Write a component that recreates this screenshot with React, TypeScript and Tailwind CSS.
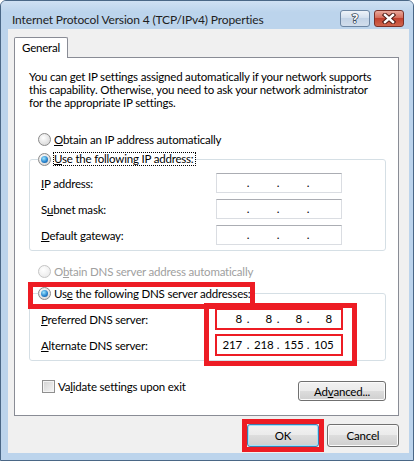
import React from 'react';

const Radio = ({ checked, disabled }: { checked?: boolean; disabled?: boolean }) => (
  <span
    className={`flex h-[13px] w-[13px] shrink-0 items-center justify-center rounded-full border ${
      disabled
        ? 'border-[#c4c4c4] bg-[radial-gradient(circle_at_40%_35%,#ffffff,#e6e6e6)]'
        : 'border-[#8a8a8a] bg-[radial-gradient(circle_at_40%_35%,#ffffff,#cfcfcf)]'
    }`}
  >
    {checked && (
      <span className="h-[7px] w-[7px] rounded-full bg-[radial-gradient(circle_at_40%_35%,#9fe8ff,#2a86cf_55%,#0c4c8f)]" />
    )}
  </span>
);

const IpBox = ({ parts, red }: { parts?: string[]; red?: boolean }) => {
  const p = parts ?? ['', '', '', ''];
  return (
    <div
      className={`flex h-[20px] w-[126px] shrink-0 items-center bg-white border leading-[14px] ${
        red ? 'border-[#ed1c24] ring-1 ring-[#ed1c24]' : 'border-[#dadde2] border-t-[#abadb3]'
      }`}
    >
      <span className="w-[25px] text-right whitespace-nowrap">{p[0]}</span>
      <span className="w-[12px] text-center">.</span>
      <span className="w-[18px] text-right whitespace-nowrap">{p[1]}</span>
      <span className="w-[12px] text-center">.</span>
      <span className="w-[18px] text-right whitespace-nowrap">{p[2]}</span>
      <span className="w-[12px] text-center">.</span>
      <span className="w-[18px] text-right whitespace-nowrap">{p[3]}</span>
    </div>
  );
};

const Row = ({ label, parts, red }: { label: React.ReactNode; parts?: string[]; red?: boolean }) => (
  <div className="flex h-[20px] items-center pl-[11px]">
    <span className="w-[175px]">{label}</span>
    <IpBox parts={parts} red={red} />
  </div>
);

const WinButton = ({ children, primary, className }: { children: React.ReactNode; primary?: boolean; className?: string }) => (
  <button
    className={`flex items-center justify-center rounded-[3px] border bg-[linear-gradient(#f2f2f2_0%,#ebebeb_48%,#dddddd_50%,#cfcfcf_100%)] text-[11.5px] text-black ${
      primary
        ? 'border-[#3c7fb1] shadow-[inset_0_0_0_1px_#9ee3fb]'
        : 'border-[#707070] shadow-[inset_0_0_0_1px_#fbfbfb]'
    } ${className ?? ''}`}
  >
    {children}
  </button>
);

export default function App() {
  return (
    <div className="h-[461px] w-[414px] overflow-hidden rounded-t-[6px] border border-[#4a6786] bg-[#bcd4ec] [font-family:Lato,sans-serif] text-[11.5px] leading-[13px] tracking-[-0.2px] text-black">
      {/* title bar */}
      <div className="flex h-[28px] items-start justify-between pl-[11px] pr-[9px] pt-[9px] bg-[linear-gradient(#cfe0f2,#bcd4ec_40%)]">
        <span className="mt-[2px] text-[12px] leading-[15px] tracking-[-0.15px] text-[#1e1e1e]">Internet Protocol Version 4 (TCP/IPv4) Properties</span>
        <div className="flex gap-[4px]">
          <div className="flex h-[17px] w-[30px] items-center justify-center rounded-[3px] border border-[#6d86a3] bg-[linear-gradient(#eef3f9,#d4e0ee_45%,#c3d3e6_50%,#d2deec)]">
            <svg width="14" height="15" viewBox="0 0 14 15">
              <text x="7" y="12" textAnchor="middle" fontSize="12" fontWeight="bold" fontFamily="Noto Sans, sans-serif" fill="#ffffff" stroke="#3b4a5c" strokeWidth="1.6" paintOrder="stroke">?</text>
            </svg>
          </div>
          <div className="flex h-[17px] w-[30px] items-center justify-center rounded-[3px] border border-[#7a3028] bg-[linear-gradient(#e9a99c,#d56e5d_45%,#c1412f_50%,#d0664e)]">
            <svg width="14" height="11" viewBox="0 0 14 11">
              <path d="M3 2 L11 9 M11 2 L3 9" stroke="#4d1a14" strokeWidth="4.4" strokeLinecap="square" />
              <path d="M3 2 L11 9 M11 2 L3 9" stroke="#ffffff" strokeWidth="2.4" strokeLinecap="square" />
            </svg>
          </div>
        </div>
      </div>

      {/* client area */}
      <div className="ml-[7px] mr-[4px] flex h-[424px] flex-col bg-[#f0f0f0] pl-[6px] pr-[10px] pt-[8px]">
        <div className="flex">
          <div className="relative z-10 -mb-px flex h-[21px] w-[54px] items-start rounded-t-[2px] border border-b-0 border-[#898c95] bg-white pl-[7px] pt-[3px] leading-[14px]">
            General
          </div>
        </div>
        <div className="relative h-[359px] border border-[#898c95] bg-white">
          <p className="ml-[14px] mr-[21px] mt-[12px]">
            You can get IP settings assigned automatically if your network supports this capability. Otherwise, you need to ask your network administrator for the appropriate IP settings.
          </p>

          <div className="ml-[23px] mt-[22px] flex h-[16px] items-center gap-[3px]">
            <Radio />
            <span><u>O</u>btain an IP address automatically</span>
          </div>

          <fieldset className="ml-[14px] mt-[4px] w-[357px] rounded-[3px] border border-[#d5dfe5] pb-[5px]">
            <legend className="ml-[8px] flex h-[16px] items-center gap-[2px]">
              <Radio checked />
              <span className="h-[14px] border border-dotted border-black pr-[1px] leading-[12px]"><u>U</u>se the following IP address:</span>
            </legend>
            <div className="flex flex-col gap-[6px] pt-[6px]">
              <Row label={<><u>I</u>P address:</>} />
              <Row label={<>S<u>u</u>bnet mask:</>} />
              <Row label={<><u>D</u>efault gateway:</>} />
            </div>
          </fieldset>

          <div className="ml-[23px] mt-[12px] flex h-[16px] items-center gap-[3px] text-[#a0a0a0]">
            <Radio disabled />
            <span>O<u>b</u>tain DNS server address automatically</span>
          </div>

          <fieldset className="ml-[14px] mt-[6px] w-[357px] rounded-[3px] border border-[#d5dfe5] pb-[5px]">
            <legend className="ml-[8px] flex h-[16px] items-center gap-[3px]">
              <Radio checked />
              <span>Us<u>e</u> the following DNS server addresses:</span>
            </legend>
            <div className="flex flex-col gap-[6px] pt-[8px]">
              <Row label={<><u>P</u>referred DNS server:</>} parts={['8', '8', '8', '8']} red />
              <Row label={<><u>A</u>lternate DNS server:</>} parts={['217', '218', '155', '105']} red />
            </div>
          </fieldset>

          <div className="ml-[27px] mr-[12px] mt-[17px] flex items-start justify-between">
            <div className="flex h-[16px] items-center gap-[3px]">
              <span className="h-[13px] w-[13px] border border-[#8f8f8f] bg-[linear-gradient(135deg,#d2d2d2,#f6f6f6)] shadow-[inset_0_0_0_1px_#f4f4f4]" />
              <span>Va<u>l</u>idate settings upon exit</span>
            </div>
            <WinButton className="mt-[3px] h-[20px] w-[88px]">Ad<u>v</u>anced...</WinButton>
          </div>

          {/* red annotation boxes */}
          <div className="pointer-events-none absolute left-[13px] top-[224px] h-[27px] w-[227px] border-[5px] border-[#ed1c24]" />
          <div className="pointer-events-none absolute left-[189px] top-[245px] h-[63px] w-[153px] border-[5px] border-[#ed1c24]" />
        </div>

        <div className="mt-[8px] flex justify-end gap-[8px]">
          <div className="-m-[5px] border-[5px] border-[#ed1c24]">
            <WinButton primary className="h-[23px] w-[72px]">OK</WinButton>
          </div>
          <WinButton className="h-[23px] w-[72px]">Cancel</WinButton>
        </div>
      </div>
    </div>
  );
}
